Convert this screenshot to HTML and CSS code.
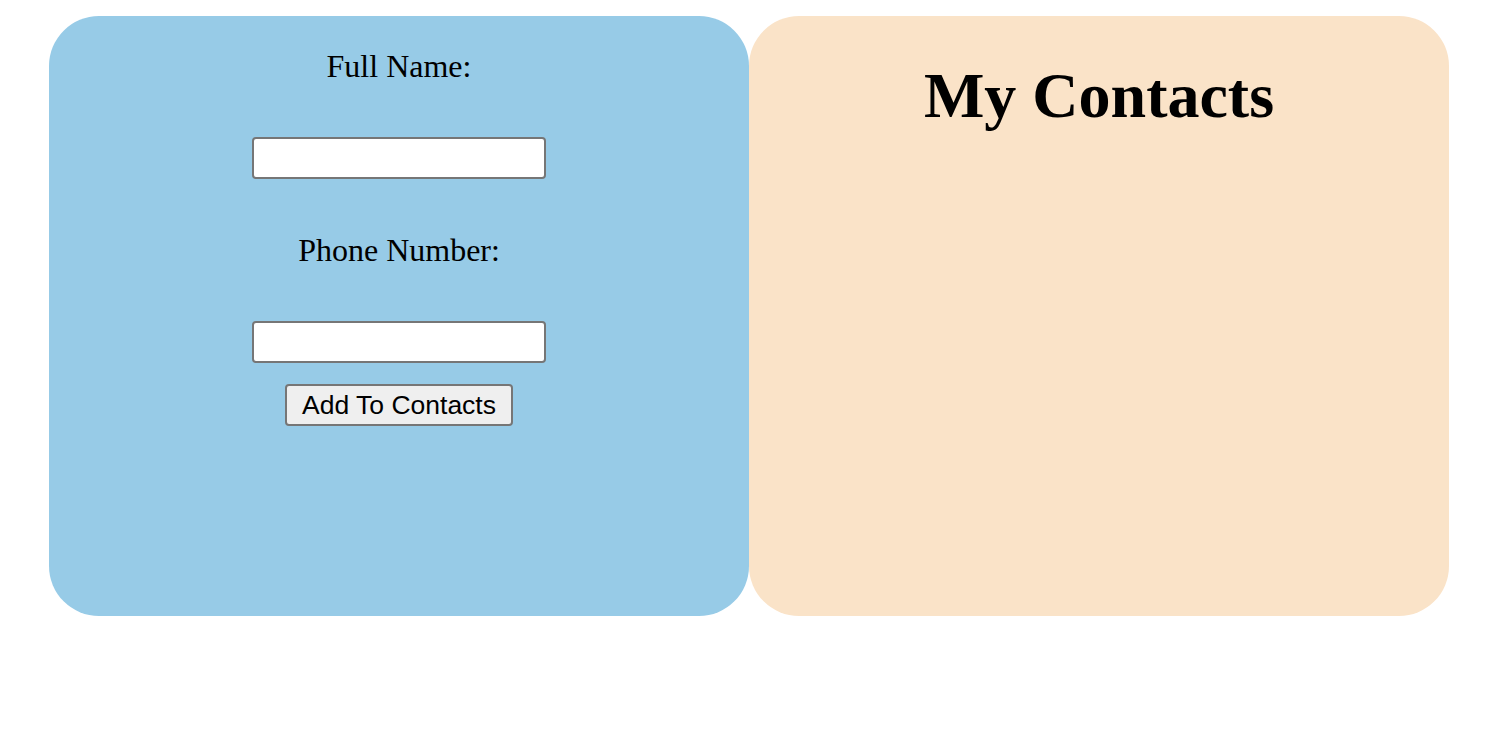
FILE: index.html
```html
<!DOCTYPE html>
<html lang="en">
<head>
<meta charset="utf-8">
<title>My Contacts</title>
<link rel="stylesheet" href="styles.css">
</head>
<body>
<div class="app">
  <section class="panel form-panel">
    <label class="field-label" for="name">Full Name:</label>
    <input class="field-input first-input" id="name" type="text">
    <label class="field-label second-label" for="phone">Phone Number:</label>
    <input class="field-input" id="phone" type="text">
    <button class="add-btn" type="button">Add To Contacts</button>
  </section>
  <section class="panel list-panel">
    <h1 class="list-title">My Contacts</h1>
  </section>
</div>
</body>
</html>
```

FILE: styles.css
```css
html, body {
  background: #ffffff;
}
body {
  margin: 8px;
  font-family: "Liberation Serif", "Times New Roman", serif;
  color: #000;
}
.app {
  display: flex;
  padding: 8px 0 0 41px;
}
.panel {
  width: 700px;
  height: 600px;
  border-radius: 50px;
  box-sizing: border-box;
}
.form-panel {
  background: #97cbe7;
  display: flex;
  flex-direction: column;
  align-items: center;
}
.list-panel {
  background: #fae3c8;
  text-align: center;
}
.field-label {
  display: block;
  font-size: 32px;
  line-height: 37px;
  margin-top: 32px;
}
.second-label {
  margin-top: 53px;
}
.field-input {
  width: 294px;
  height: 42px;
  box-sizing: border-box;
  margin-top: 52px;
  border: 2px solid #767676;
  border-radius: 4px;
  background: #fff;
  font-size: 16px;
  padding: 1px 4px;
}
.add-btn {
  margin-top: 21px;
  width: 228px;
  height: 42px;
  box-sizing: border-box;
  background: #efefef;
  border: 2px solid #767676;
  border-radius: 4px;
  font-family: "Liberation Sans", Arial, sans-serif;
  font-size: 26.5px;
  color: #000;
  padding: 0;
  display: flex;
  align-items: center;
  justify-content: center;
}
.list-title {
  font-size: 64px;
  font-weight: bold;
  margin: 43px 0 0;
  line-height: normal;
}
```
